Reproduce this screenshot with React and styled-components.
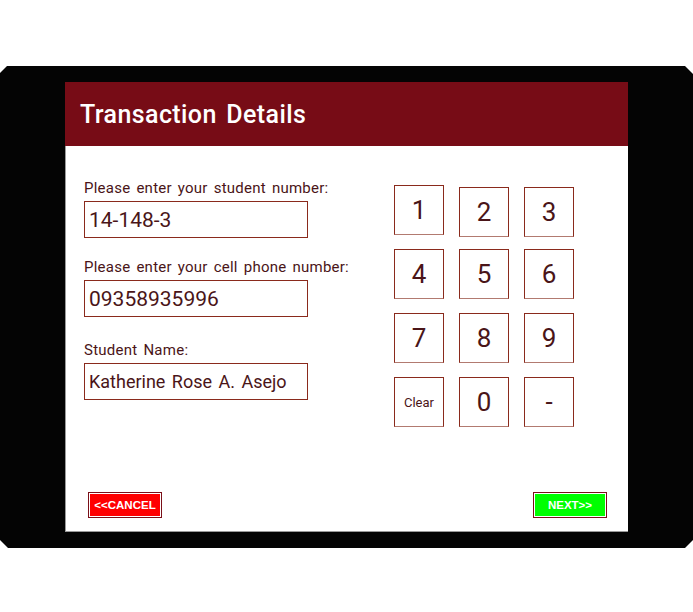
import React, { useState } from "react";
import styled, { createGlobalStyle } from "styled-components";

const GlobalStyle = createGlobalStyle`
   html, body {
      margin: 0;
      padding: 0;
      background: #ffffff;
      font-family: Roboto, "Liberation Sans", Arial, sans-serif;
   }
`;

const Page = styled.div`
   width: 693px;
   height: 612px;
   padding-top: 66px;
   box-sizing: border-box;
`;

const Frame = styled.div`
   width: 693px;
   height: 482px;
   box-sizing: border-box;
   padding: 16px 65px 16px 65px;
   background: #040404;
   clip-path: polygon(7px 0, calc(100% - 8px) 0, 100% 8px, 100% calc(100% - 8px), calc(100% - 8px) 100%, 8px 100%, 0 calc(100% - 8px), 0 7px);
`;

const Panel = styled.div`
   height: 100%;
   display: flex;
   flex-direction: column;
   background: #ffffff;
   box-shadow: inset 1px -1px 0 #9a9a9a;
`;

const Header = styled.div`
   height: 64px;
   flex: none;
   display: flex;
   align-items: center;
   padding-left: 15px;
   background: #770c16;
   color: #ffffff;
   font-size: 25px;
   font-weight: 500;
   word-spacing: 3px;
   letter-spacing: 0.4px;
`;

const Body = styled.div`
   flex: 1;
   display: flex;
   flex-direction: column;
   padding: 33px 21px 14px 19px;
`;

const Main = styled.div`
   display: flex;
`;

const Form = styled.div`
   width: 310px;
   display: flex;
   flex-direction: column;
`;

const Field = styled.div`
   display: flex;
   flex-direction: column;
   gap: 4px;
   margin-bottom: ${p => p.$gap}px;
`;

const Label = styled.label`
   font-size: 15px;
   line-height: 18px;
   color: #4a1518;
   word-spacing: 2px;
   letter-spacing: 0.25px;
`;

const Input = styled.div`
   width: 224px;
   height: 37px;
   box-sizing: border-box;
   border: 1px solid #8a2a1c;
   display: flex;
   align-items: center;
   padding-left: 4px;
   font-size: ${p => p.$size}px;
   color: #4a1518;
   word-spacing: 2px;
`;

const Keypad = styled.div`
   margin-top: 6px;
   display: grid;
   grid-template-columns: repeat(3, 50px);
   grid-auto-rows: 50px;
   column-gap: 15px;
   row-gap: 14px;
`;

const Key = styled.button`
   width: 50px;
   height: 50px;
   box-sizing: border-box;
   margin-top: ${p => p.$offset || 0}px;
   padding: 0;
   background: #ffffff;
   border: 1px solid #8a2a1c;
   border-bottom-color: #b27a70;
   color: #4a1518;
   font-family: Roboto, "Liberation Sans", Arial, sans-serif;
   font-size: ${p => (p.$small ? 13 : 26)}px;
   cursor: pointer;
`;

const Footer = styled.div`
   margin-top: auto;
   display: flex;
   justify-content: space-between;
   padding-left: 4px;
`;

const NavButton = styled.button`
   width: 74px;
   height: 26px;
   box-sizing: border-box;
   padding: 0;
   background: ${p => p.$color};
   border: 1px solid #7a1018;
   box-shadow: inset 0 0 0 1px #ffffff;
   color: #ffffff;
   font-family: "Liberation Sans", Arial, sans-serif;
   font-size: 11.5px;
   font-weight: bold;
   cursor: pointer;
`;

const keys = ["1", "2", "3", "4", "5", "6", "7", "8", "9", "Clear", "0", "-"];

export default function App() {
   const [student] = useState("14-148-3");
   const [phone] = useState("09358935996");

   return (
      <Page>
         <GlobalStyle />
         <Frame>
            <Panel>
               <Header>Transaction Details</Header>
               <Body>
                  <Main>
                     <Form>
                        <Field $gap={20}>
                           <Label>Please enter your student number:</Label>
                           <Input $size={21}>{student}</Input>
                        </Field>
                        <Field $gap={24}>
                           <Label>Please enter your cell phone number:</Label>
                           <Input $size={21}>{phone}</Input>
                        </Field>
                        <Field $gap={0}>
                           <Label>Student Name:</Label>
                           <Input $size={18}>Katherine Rose A. Asejo</Input>
                        </Field>
                     </Form>
                     <Keypad>
                        {keys.map((k, i) => (
                           <Key key={k} $small={k === "Clear"} $offset={i === 1 || i === 2 ? 2 : 0}>
                              {k}
                           </Key>
                        ))}
                     </Keypad>
                  </Main>
                  <Footer>
                     <NavButton $color="#ff0000">&lt;&lt;CANCEL</NavButton>
                     <NavButton $color="#00ff00">NEXT&gt;&gt;</NavButton>
                  </Footer>
               </Body>
            </Panel>
         </Frame>
      </Page>
   );
}
